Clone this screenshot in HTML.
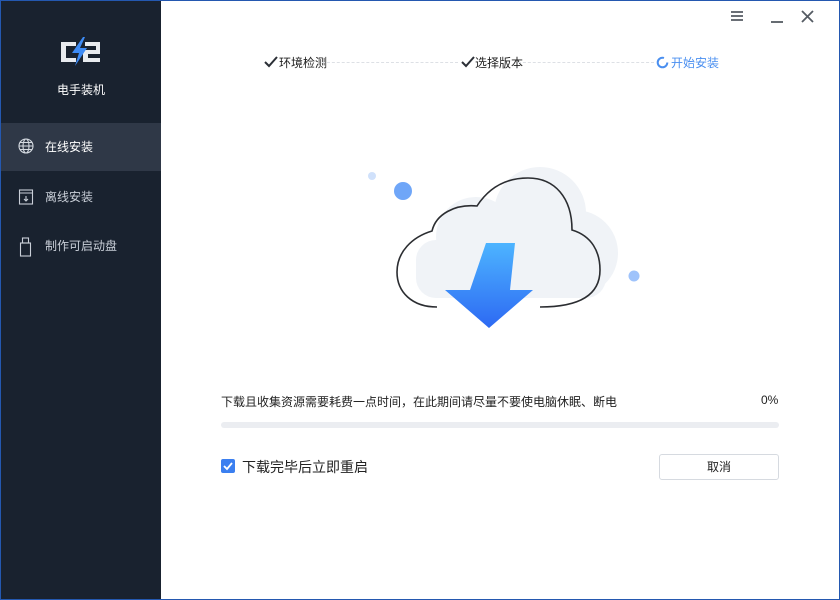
<!DOCTYPE html>
<html><head><meta charset="utf-8"><style>
*{margin:0;padding:0;box-sizing:border-box}
body{width:840px;height:600px;overflow:hidden;background:#fff;font-family:"Liberation Sans","Noto Sans CJK SC",sans-serif;position:relative}
.frame{position:absolute;left:0;top:0;width:840px;height:600px;border:1px solid #2458b0;pointer-events:none;z-index:9}
.side{position:absolute;left:0;top:0;width:161px;height:600px;background:#19222f}
.t{position:absolute;white-space:nowrap}
.item{position:absolute;left:0;width:161px;height:48px;color:#c9cfd8;font-size:12px}
.item span{position:absolute;left:45px;top:15px}
.item svg{position:absolute;left:18px;top:15px}
</style></head><body>
<div class="side">
  <svg style="position:absolute;left:60px;top:37px" width="42" height="30" viewBox="0 0 42 30">
    <path d="M1 5h15v4H6v12h10v4H1z" fill="#e8ebef"/>
    <path d="M25 5h15v12H28v4h12v4H23v-12h13v-4H25z" fill="#e8ebef"/>
    <path d="M23 0L12 16h7l-4 13 12-18h-7l5-11z" fill="#3d8bf5"/>
  </svg>
  <div class="t" style="left:57px;top:81px;color:#fff;font-size:12px">电手装机</div>
  <div class="item" style="top:123px;background:#2f3847;color:#fff"><svg width="16" height="16" viewBox="0 0 16 16" fill="none" stroke="#d5dae1" stroke-width="1.1"><circle cx="8" cy="8" r="7"/><ellipse cx="8" cy="8" rx="3" ry="7"/><path d="M1 8h14M2 4.5h12M2 11.5h12"/></svg><span>在线安装</span></div>
  <div class="item" style="top:173px"><svg width="16" height="18" viewBox="0 0 16 18" fill="none" stroke="#c9cfd8" stroke-width="1.1"><rect x="1.5" y="2" width="13" height="14"/><path d="M1.5 5h13M8 8v5M6 11l2 2 2-2"/></svg><span>离线安装</span></div>
  <div class="item" style="top:222px"><svg width="16" height="20" viewBox="0 0 16 20" fill="none" stroke="#c9cfd8" stroke-width="1.1"><rect x="4.5" y="1" width="6" height="5"/><rect x="2.5" y="6" width="10" height="13"/></svg><span>制作可启动盘</span></div>
</div>
<div class="frame"></div>
<svg style="position:absolute;left:730px;top:10px" width="14" height="14"><path d="M1 2h12M1 6h12M1 10h12" stroke="#555b63" stroke-width="1.8"/></svg>
<svg style="position:absolute;left:770px;top:10px" width="14" height="14"><path d="M1 12h12" stroke="#555b63" stroke-width="1.8"/></svg>
<svg style="position:absolute;left:801px;top:10px" width="13" height="13"><path d="M1 1l11 11M12 1L1 12" stroke="#555b63" stroke-width="1.8"/></svg>
<svg style="position:absolute;left:264px;top:56px" width="14" height="12"><path d="M1 6l4 4 8-9" stroke="#2b2f36" stroke-width="2" fill="none"/></svg>
<div class="t" style="left:279px;top:54px;font-size:12px;color:#222">环境检测</div>
<div style="position:absolute;left:322px;top:62px;width:136px;border-top:1px dashed #dde0e5"></div>
<svg style="position:absolute;left:461px;top:56px" width="14" height="12"><path d="M1 6l4 4 8-9" stroke="#2b2f36" stroke-width="2" fill="none"/></svg>
<div class="t" style="left:475px;top:54px;font-size:12px;color:#222">选择版本</div>
<div style="position:absolute;left:518px;top:62px;width:136px;border-top:1px dashed #dde0e5"></div>
<svg style="position:absolute;left:656px;top:56px" width="13" height="13"><circle cx="6.5" cy="6.5" r="4.8" stroke="#4a8ff0" stroke-width="2" fill="none" stroke-dasharray="24 6"/></svg>
<div class="t" style="left:671px;top:54px;font-size:12px;color:#4a8ff0">开始安装</div>
<svg style="position:absolute;left:0;top:0" width="840" height="600">
  <defs><linearGradient id="g" x1="0" y1="0" x2="0" y2="1"><stop offset="0" stop-color="#4db4ff"/><stop offset="1" stop-color="#2d69f3"/></linearGradient></defs>
  <g fill="#f0f3f7"><circle cx="540" cy="213" r="46"/><circle cx="476" cy="237" r="40"/><circle cx="575" cy="253" r="43"/><rect x="416" y="240" width="190" height="58" rx="20"/></g>
  <circle cx="372" cy="176" r="4" fill="#d0e1fb"/><circle cx="403" cy="191" r="9" fill="#6fa6f8"/><circle cx="634" cy="276" r="5.5" fill="#9fc3fb"/>
  <path d="M437 307C412 307 397 292 397 272C397 252 412 237 432 231C436 214 455 204 477 206C490 186 508 178 528 178C555 178 572 198 572 230C592 236 600 252 600 270C600 292 584 307 540 307" fill="none" stroke="#2b2d31" stroke-width="1.6"/>
  <path d="M486 243h29l-5 47h23l-44 38-44-38h25z" fill="url(#g)" stroke-linejoin="round"/>
</svg>
<div class="t" style="left:221px;top:393px;font-size:12px;color:#222">下载且收集资源需要耗费一点时间，在此期间请尽量不要使电脑休眠、断电</div>
<div class="t" style="left:761px;top:393px;font-size:12px;color:#222">0%</div>
<div style="position:absolute;left:221px;top:422px;width:558px;height:6px;border-radius:3px;background:#ebedf1"></div>
<div style="position:absolute;left:221px;top:459px;width:14px;height:14px;border-radius:2px;background:#3b7ff0"></div>
<svg style="position:absolute;left:221px;top:459px" width="14" height="14"><path d="M3 7l3 3 5-6" stroke="#fff" stroke-width="1.8" fill="none"/></svg>
<div class="t" style="left:242px;top:457px;font-size:14px;color:#222">下载完毕后立即重启</div>
<div style="position:absolute;left:659px;top:454px;width:120px;height:26px;border:1px solid #d6dae0;border-radius:3px;font-size:12px;color:#222;text-align:center;line-height:24px">取消</div>
</body></html>
